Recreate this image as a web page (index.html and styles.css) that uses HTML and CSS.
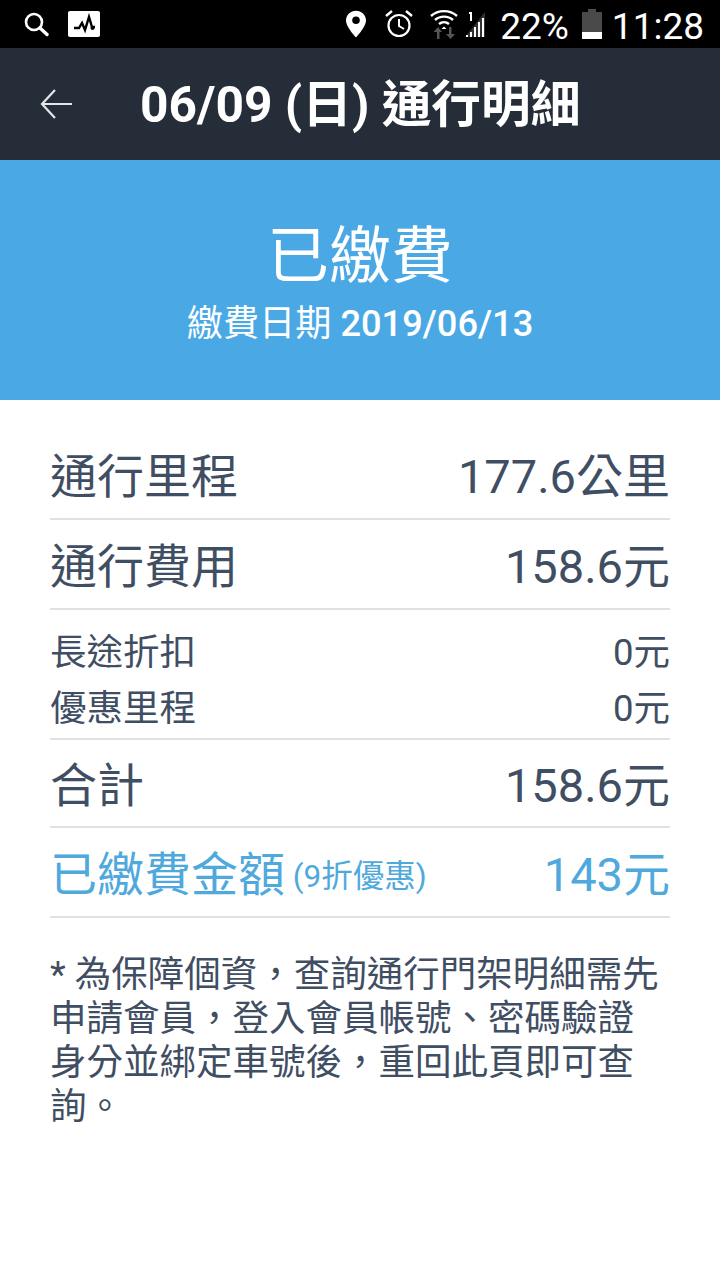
FILE: index.html
```
<!DOCTYPE html>
<html lang="zh-Hant">
<head>
<meta charset="utf-8">
<title>通行明細</title>
<link rel="stylesheet" href="styles.css">
</head>
<body>
<div class="status">
  <div class="status-left">
    <svg class="i-search" width="28" height="28" viewBox="0 0 28 28"><circle cx="12" cy="12" r="8" fill="none" stroke="#fff" stroke-width="2.6"/><path d="M18 18l7 6.5" stroke="#fff" stroke-width="3.4" stroke-linecap="round"/></svg>
    <svg class="i-pulse" width="32" height="26" viewBox="0 0 32 26"><rect width="32" height="26" rx="2" fill="#fff"/><path d="M6 17h5l3-5 3 7 4-13 3 10h3" fill="none" stroke="#000" stroke-width="2.4"/><circle cx="24.5" cy="17" r="2" fill="#000"/></svg>
  </div>
  <div class="status-right">
    <svg class="i-pin" width="20" height="28" viewBox="0 0 21 28"><path d="M10.500 0C4.700 0 0 4.500 0 10.200 0 17 10.500 28 10.500 28S21 17 21 10.200C21 4.500 16.300 0 10.500 0zm0 14a4 4 0 1 1 0-8 4 4 0 0 1 0 8z" fill="#fff"/></svg>
    <svg class="i-alarm" width="30" height="30" viewBox="0 0 30 30"><circle cx="15" cy="16.500" r="10.500" fill="none" stroke="#fff" stroke-width="2.200"/><path d="M15 10v7l5 3" fill="none" stroke="#fff" stroke-width="2"/><path d="M2 7l6-5M28 7l-6-5" stroke="#fff" stroke-width="2.400"/></svg>
    <svg class="i-wifi" width="28" height="30" viewBox="0 0 28 30"><path d="M1 7c7-6.500 19-6.500 26 0M5 11c5-4.500 13-4.500 18 0M9 15c3-2.500 7-2.500 10 0" fill="none" stroke="#fff" stroke-width="2.400"/><path d="M14 17.500l-2.500 2.500h5z" fill="#fff"/><path d="M7 30v-7H3.500L8 18l4 5H9.500v7zM19 18v7h-3l4.500 5 4.500-5h-3.500v-7z" fill="#555"/></svg>
    <svg class="i-signal" width="24" height="28" viewBox="0 0 24 28"><path d="M1 27l20-25v25z" fill="#333"/><path d="M2 25h2v2H2zM6 22h2v5H6zM10 17h2v10h-2zM14 12h2v15h-2zM18 8h2v19h-2z" fill="#fff"/><path d="M5 2h3v9H6V4H5z" fill="#fff"/></svg>
    <span class="pct">22%</span>
    <svg class="i-batt" width="20" height="30" viewBox="0 0 20 30"><path d="M6 0h8v3h6v27H0V3h6z" fill="#4a4a4a"/><rect y="23" width="20" height="7" fill="#fff"/></svg>
    <span class="time">11:28</span>
  </div>
</div>
<header class="appbar">
  <svg class="back" width="34" height="34" viewBox="0 0 34 34"><path d="M33 17H3M16 3L3 17l13 14" fill="none" stroke="#e4e6e9" stroke-width="2.200"/></svg>
  <h1 class="title">06/09 (日) 通行明細</h1>
</header>
<section class="banner">
  <div class="banner-main">已繳費</div>
  <div class="banner-sub">繳費日期 <span class="banner-date">2019/06/13</span></div>
</section>
<main class="content">
  <div class="row row-a"><span>通行里程</span><span>177.6公里</span></div>
  <div class="row row-b"><span>通行費用</span><span>158.6元</span></div>
  <div class="group">
    <div class="row-small"><span>長途折扣</span><span>0元</span></div>
    <div class="row-small"><span>優惠里程</span><span>0元</span></div>
  </div>
  <div class="row row-c"><span>合計</span><span>158.6元</span></div>
  <div class="row row-paid"><span>已繳費金額<small class="note"> (9折優惠)</small></span><span>143元</span></div>
  <p class="foot">* 為保障個資，查詢通行門架明細需先申請會員，登入會員帳號、密碼驗證身分並綁定車號後，重回此頁即可查詢。</p>
</main>
</body>
</html>
```
FILE: styles.css
```
* { box-sizing: border-box; }
html, body { margin: 0; padding: 0; }
body {
  width: 720px;
  height: 1280px;
  background: #fff;
  overflow: hidden;
  font-family: Roboto, "Noto Sans CJK TC", sans-serif;
  color: #3f4e63;
}
.status {
  height: 48px;
  background: #000;
  display: flex;
  justify-content: space-between;
  align-items: center;
  padding: 0 16px 0 22px;
  color: #fff;
}
.status-left, .status-right { display: flex; align-items: center; }
.i-pulse { margin-left: 18px; }
.i-pin { margin-right: 1px; }
.i-alarm { margin-left: 17px; }
.i-wifi { margin-left: 16px; }
.i-signal { margin-left: 6px; }
.pct {
  font: 37px/48px Roboto, sans-serif;
  padding-top: 5px;
  margin-left: 12px;
}
.i-batt { margin-left: 13px; }
.time {
  font: 37px/48px Roboto, sans-serif;
  padding-top: 5px;
  margin-left: 10px;
}
.appbar {
  height: 112px;
  background: #252d39;
  display: flex;
  align-items: center;
  padding: 0 0 0 39px;
}
.title {
  margin: 2px 0 0 67px;
  font-size: 49.700px;
  line-height: 60px;
  font-weight: 700;
  color: #fff;
}
.banner {
  height: 240px;
  background: #4aa9e5;
  color: #fff;
  display: flex;
  flex-direction: column;
  align-items: center;
  padding-top: 58px;
}
.banner-main { font-size: 62px; line-height: 78px; }
.banner-sub { font-size: 36.200px; line-height: 46px; margin-top: 5px; }
.banner-date { font-weight: 500; }
.content { padding: 0 50px; }
.row {
  display: flex;
  justify-content: space-between;
  align-items: center;
  border-bottom: 2px solid #dfe2e5;
  font-size: 47px;
}
.row-a { height: 120px; padding-top: 27px; }
.row-b { height: 90px; padding-bottom: 3px; }
.row-c { height: 88px; padding-bottom: 4px; }
.row-paid { height: 90px; padding-bottom: 4px; color: #4fa9dd; }
.note { font-size: 31.500px; vertical-align: 4px; }
.group {
  height: 130px;
  border-bottom: 2px solid #dfe2e5;
  padding-top: 11px;
}
.row-small {
  display: flex;
  justify-content: space-between;
  align-items: center;
  height: 56px;
  font-size: 36.500px;
}
.foot {
  margin: 35px 0 0;
  padding-right: 10px;
  font-size: 36.500px;
  line-height: 44px;
}
```
